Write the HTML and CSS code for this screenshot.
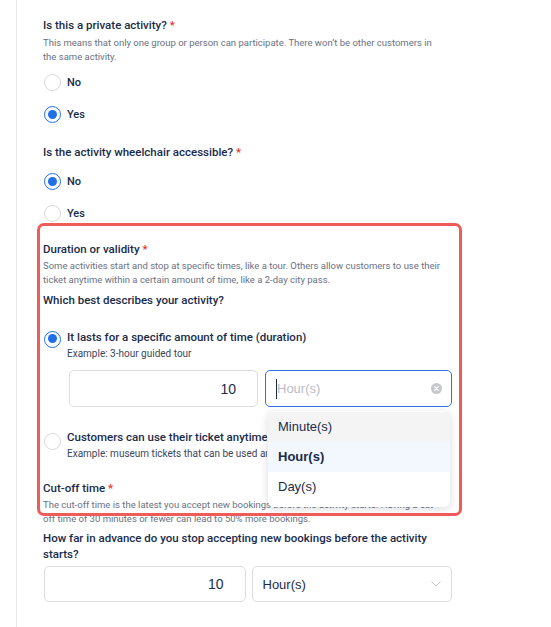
FILE: index.html
```html
<!DOCTYPE html>
<html lang="en">
<head>
<meta charset="utf-8">
<title>Activity details</title>
<link rel="stylesheet" href="styles.css">
</head>
<body>
<div class="page">
  <section class="q q-private">
    <h3 class="q-title">Is this a private activity? <span class="req">*</span></h3>
    <p class="q-desc">This means that only one group or person can participate. There won’t be other customers in the same activity.</p>
    <div class="radios">
      <div class="radio"><span class="dot"></span><span class="r-label">No</span></div>
      <div class="radio checked"><span class="dot"></span><span class="r-label">Yes</span></div>
    </div>
  </section>

  <section class="q q-wheel">
    <h3 class="q-title">Is the activity wheelchair accessible? <span class="req">*</span></h3>
    <div class="radios">
      <div class="radio checked"><span class="dot"></span><span class="r-label">No</span></div>
      <div class="radio"><span class="dot"></span><span class="r-label">Yes</span></div>
    </div>
  </section>

  <section class="q q-duration">
    <h3 class="q-title">Duration or validity <span class="req">*</span></h3>
    <p class="q-desc">Some activities start and stop at specific times, like a tour. Others allow customers to use their ticket anytime within a certain amount of time, like a 2-day city pass.</p>
    <h4 class="q-sub">Which best describes your activity?</h4>

    <div class="opt opt-first checked">
      <span class="dot"></span>
      <div class="opt-body">
        <div class="opt-label">It lasts for a specific amount of time (duration)</div>
        <div class="opt-ex">Example: 3-hour guided tour</div>
      </div>
    </div>

    <div class="pair pair-indent">
      <div class="field num">10</div>
      <div class="field select focused">
        <span class="caret"></span><span class="ph">Hour(s)</span>
        <svg class="clear" width="11" height="11" viewBox="0 0 11 11"><circle cx="5.5" cy="5.5" r="5.5" fill="#c6c8cc"/><path d="M3.6 3.6 L7.4 7.4 M7.4 3.6 L3.6 7.4" stroke="#fff" stroke-width="1.3" stroke-linecap="round"/></svg>
        <ul class="menu">
          <li class="item hover">Minute(s)</li>
          <li class="item selected">Hour(s)</li>
          <li class="item">Day(s)</li>
        </ul>
      </div>
    </div>

    <div class="opt opt-second">
      <span class="dot"></span>
      <div class="opt-body">
        <div class="opt-label">Customers can use their ticket anytime within a certain period (validity)</div>
        <div class="opt-ex">Example: museum tickets that can be used anytime during opening hours</div>
      </div>
    </div>
  </section>

  <section class="q q-cutoff">
    <h3 class="q-title">Cut-off time <span class="req">*</span></h3>
    <p class="q-desc">The cut-off time is the latest you accept new bookings before the activity starts. Having a cut-off time of 30 minutes or fewer can lead to 50% more bookings.</p>
    <h4 class="q-sub">How far in advance do you stop accepting new bookings before the activity starts?</h4>
    <div class="pair">
      <div class="field num">10</div>
      <div class="field select">
        <span class="val">Hour(s)</span>
        <svg class="chev" width="10" height="6" viewBox="0 0 10 6"><path d="M0.5 0.5 L5 5 L9.5 0.5" fill="none" stroke="#c9cbd0" stroke-width="1"/></svg>
      </div>
    </div>
  </section>

  <div class="highlight"></div>
</div>
</body>
</html>
```

FILE: styles.css
```css
* { box-sizing: border-box; }

html, body {
  margin: 0;
  padding: 0;
  background: #fff;
}

body {
  font-family: Roboto, "Liberation Sans", Arial, sans-serif;
  color: #1a2b49;
}

.page {
  position: relative;
  margin-left: 16px;
  border-left: 1px solid #e8e8ea;
  padding: 17px 0 0 26px;
  min-height: 627px;
}

.q { width: 409px; }
.q-wheel { margin-top: 21px; }
.q-duration { margin-top: 19px; }
.q-cutoff { margin-top: 19px; }

.q-title {
  margin: 0;
  font-size: 11.5px;
  line-height: 16px;
  font-weight: 500;
  color: #1a2b49;
}

.req { color: #e8302f; }

.q-desc {
  margin: 3px 0 0;
  font-size: 9.5px;
  line-height: 14px;
  color: #6a7182;
}

.q-private .q-desc { width: 394px; }
.q-cutoff .q-desc { width: 398px; }

.q-duration .q-desc,
.q-cutoff .q-desc { margin-top: 2px; }

.q-sub {
  margin: 5px 0 0;
  font-size: 11.5px;
  line-height: 16px;
  font-weight: 500;
  color: #1a2b49;
}

.q-cutoff .q-sub { margin-top: 4px; }

.radios {
  display: flex;
  flex-direction: column;
  gap: 15px;
  margin-top: 10px;
}

.q-wheel .radios { margin-top: 13px; }

.radio {
  display: flex;
  align-items: center;
  height: 17px;
  gap: 6px;
}

.r-label {
  font-size: 11px;
  font-weight: 500;
  color: #1a2b49;
}

.dot {
  flex: none;
  width: 17px;
  height: 17px;
  border-radius: 50%;
  border: 1px solid #d6d8dc;
  background: #fff;
  position: relative;
}

.checked > .dot {
  border: 1.5px solid #1f6fe6;
}

.checked > .dot::after {
  content: "";
  position: absolute;
  left: 2.5px;
  top: 2.5px;
  width: 9px;
  height: 9px;
  border-radius: 50%;
  background: #1f6fe6;
}

.radio .dot { margin-left: 1px; }

.opt {
  display: flex;
  gap: 6px;
}

.opt .dot { margin-left: 1px; margin-top: 1.5px; }
.opt-second .dot { margin-top: 3.5px; }

.opt-first { margin-top: 21px; }
.opt-second { margin-top: 22px; }

.opt-body { min-width: 0; flex: 1; overflow: hidden; }
.opt-second .opt-body { flex: none; width: 200px; }

.opt-label {
  font-size: 11.5px;
  line-height: 16px;
  font-weight: 500;
  color: #1a2b49;
  white-space: nowrap;
  overflow: hidden;
}

.opt-ex {
  margin-top: 2px;
  font-size: 10px;
  line-height: 14px;
  color: #3b465c;
  white-space: nowrap;
  overflow: hidden;
}

.pair {
  display: flex;
  gap: 6px;
  margin-top: 4px;
  margin-left: 1px;
  height: 36px;
}

.pair-indent {
  margin-top: 9px;
  margin-left: 26px;
  height: 37px;
  gap: 7px;
}

.field {
  flex: 1;
  border: 1px solid #dcdde0;
  border-radius: 5px;
  font-family: "Liberation Sans", Arial, sans-serif;
  font-size: 14px;
  display: flex;
  align-items: center;
  color: #1a2b49;
  background: #fff;
}

.num {
  justify-content: flex-end;
  padding-right: 21px;
}

.select {
  position: relative;
  padding: 0 10px;
  font-size: 13px;
}

.select.focused {
  border-color: #2a73e6;
  padding-right: 9px;
}

.caret {
  width: 1px;
  height: 20px;
  background: #1a2b49;
  flex: none;
}

.ph { color: #b9bdc5; }

.clear { margin-left: auto; }

.val { color: #1a2b49; }

.chev { margin-left: auto; }

.menu {
  position: absolute;
  left: 2px;
  top: 40px;
  width: 182px;
  margin: 0;
  padding: 1px 0 5px;
  list-style: none;
  background: #fff;
  border-radius: 6px;
  box-shadow: 0 2px 8px rgba(20, 30, 50, 0.16);
  z-index: 5;
}

.item {
  height: 30px;
  line-height: 30px;
  padding-left: 10px;
  font-size: 13px;
  color: #1a2b49;
}

.item.hover { background: #f4f4f5; border-radius: 4px 4px 0 0; }
.item.selected { background: #f3f8fe; font-weight: 700; }

.highlight {
  position: absolute;
  left: 20px;
  top: 223px;
  width: 425px;
  height: 293px;
  border: 3px solid #f05b59;
  border-radius: 7px;
  pointer-events: none;
  z-index: 6;
}
```
